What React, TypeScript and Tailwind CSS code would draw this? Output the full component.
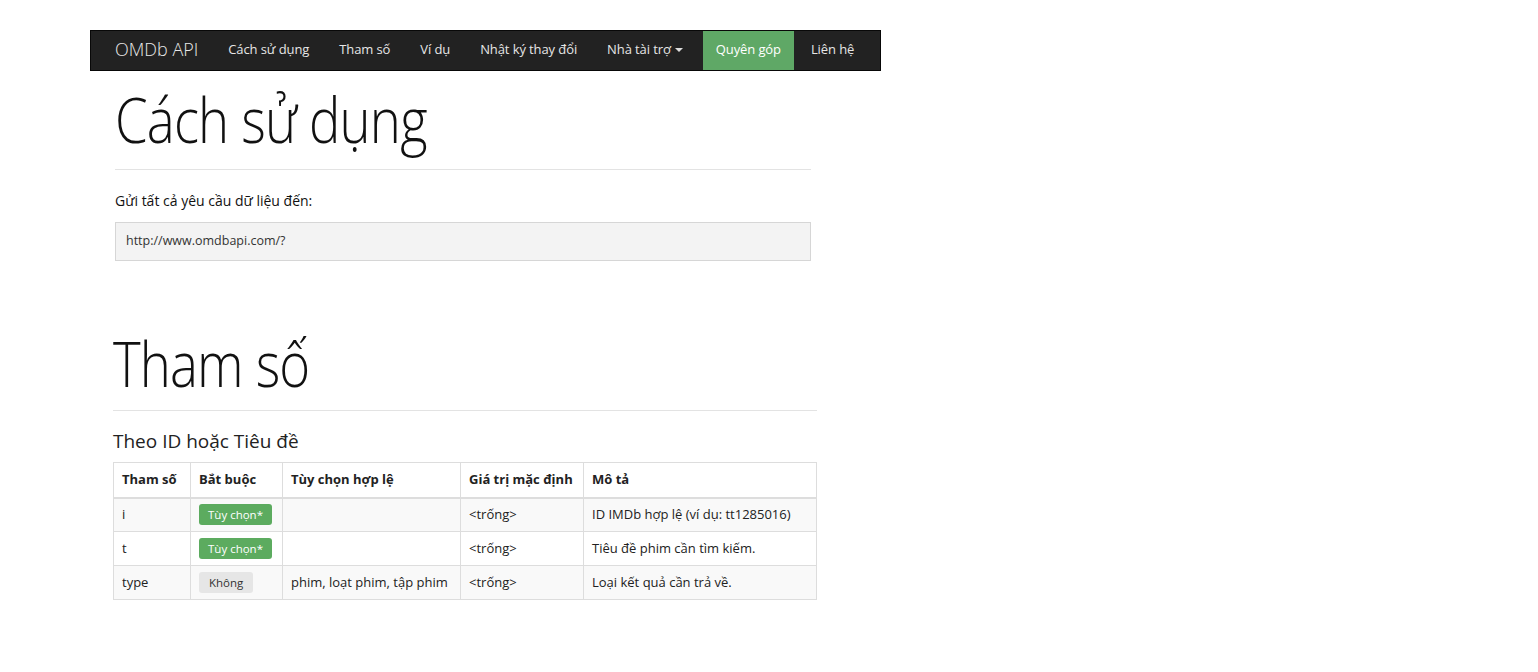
import React from "react";

const navItems = ["Cách sử dụng", "Tham số", "Ví dụ", "Nhật ký thay đổi"];

const rows = [
  { p: "i", req: "opt", valid: "", def: "<trống>", desc: "ID IMDb hợp lệ (ví dụ: tt1285016)" },
  { p: "t", req: "opt", valid: "", def: "<trống>", desc: "Tiêu đề phim cần tìm kiếm." },
  { p: "type", req: "no", valid: "phim, loạt phim, tập phim", def: "<trống>", desc: "Loại kết quả cần trả về." },
];

export default function App() {
  return (
    <div className="min-h-[672px] bg-white font-['Open_Sans',sans-serif] text-[#111]">
      <div className="pt-[30px] pl-[90px]">
        {/* Navbar */}
        <nav className="flex h-[41px] w-[791px] items-stretch whitespace-nowrap border border-[#080808] bg-[#222] pb-[2px] text-[13px] tracking-[-0.1px] text-[#e6e6e6]">
          <div className="flex shrink-0 items-center pl-[24px] pr-[15px] text-[18px] font-light tracking-normal text-[#e8e8e8]">OMDb API</div>
          {navItems.map((item) => (
            <div key={item} className="flex shrink-0 items-center px-[15px]">
              {item}
            </div>
          ))}
          <div className="flex shrink-0 items-center px-[15px]">
            Nhà tài trợ
            <span className="ml-[4px] inline-block h-0 w-0 border-x-[4px] border-t-[4px] border-x-transparent border-t-[#ddd]" />
          </div>
          <div className="-mb-[2px] ml-[5px] flex shrink-0 items-center bg-[#5fa866] px-[13px] pb-[2px] text-white">Quyên góp</div>
          <div className="flex shrink-0 items-center px-[17px]">Liên hệ</div>
        </nav>

        {/* Usage */}
        <div className="pl-[25px]">
          <h1 className="mt-[11px] origin-left scale-x-[0.85] text-[62px] leading-[74px] font-light tracking-[-1px]">Cách sử dụng</h1>
          <hr className="mt-[13px] w-[696px] border-t border-[#e3e3e3]" />
          <p className="mt-[20px] text-[14px] leading-[22px]">Gửi tất cả yêu cầu dữ liệu đến:</p>
          <div className="mt-[10px] flex h-[39px] w-[696px] items-center border border-[#d6d6d6] bg-[#f3f3f3] px-[10px] text-[12.5px] text-[#333]">
            http://www.omdbapi.com/?
          </div>
        </div>

        {/* Parameters */}
        <div className="pl-[23px]">
          <h1 className="mt-[65px] origin-left scale-x-[0.85] text-[62px] leading-[74px] font-light tracking-[-1px]">Tham số</h1>
          <hr className="mt-[10px] w-[704px] border-t border-[#e3e3e3]" />
          <h3 className="mt-[16px] text-[19px] leading-[28px] text-[#222]">Theo ID hoặc Tiêu đề</h3>
          <table className="mt-[7px] w-[704px] table-fixed border-collapse whitespace-nowrap border border-[#ddd] text-[13px] text-[#222]">
            <thead>
              <tr className="h-[35px] border-b-2 border-[#ddd] text-left font-bold">
                <th className="w-[77px] border-r border-[#ddd] px-[8px]">Tham số</th>
                <th className="w-[92px] border-r border-[#ddd] px-[8px]">Bắt buộc</th>
                <th className="w-[178px] border-r border-[#ddd] px-[8px]">Tùy chọn hợp lệ</th>
                <th className="w-[123px] border-r border-[#ddd] px-[8px]">Giá trị mặc định</th>
                <th className="px-[8px]">Mô tả</th>
              </tr>
            </thead>
            <tbody>
              {rows.map((r, i) => (
                <tr key={r.p} className={`h-[34px] border-t border-[#ddd] ${i % 2 === 0 ? "bg-[#f9f9f9]" : "bg-white"}`}>
                  <td className="border-r border-[#ddd] px-[8px]">{r.p}</td>
                  <td className="border-r border-[#ddd] px-[8px]">
                    {r.req === "opt" ? (
                      <span className="inline-block rounded-[3px] bg-[#5cab5f] px-[9px] py-[2px] text-[11.5px] text-white">Tùy chọn*</span>
                    ) : (
                      <span className="inline-block rounded-[3px] bg-[#e6e6e6] px-[10px] py-[2px] text-[11.5px] text-[#333]">Không</span>
                    )}
                  </td>
                  <td className="border-r border-[#ddd] px-[8px]">{r.valid}</td>
                  <td className="border-r border-[#ddd] px-[8px]">{r.def}</td>
                  <td className="px-[8px]">{r.desc}</td>
                </tr>
              ))}
            </tbody>
          </table>
        </div>
      </div>
    </div>
  );
}
